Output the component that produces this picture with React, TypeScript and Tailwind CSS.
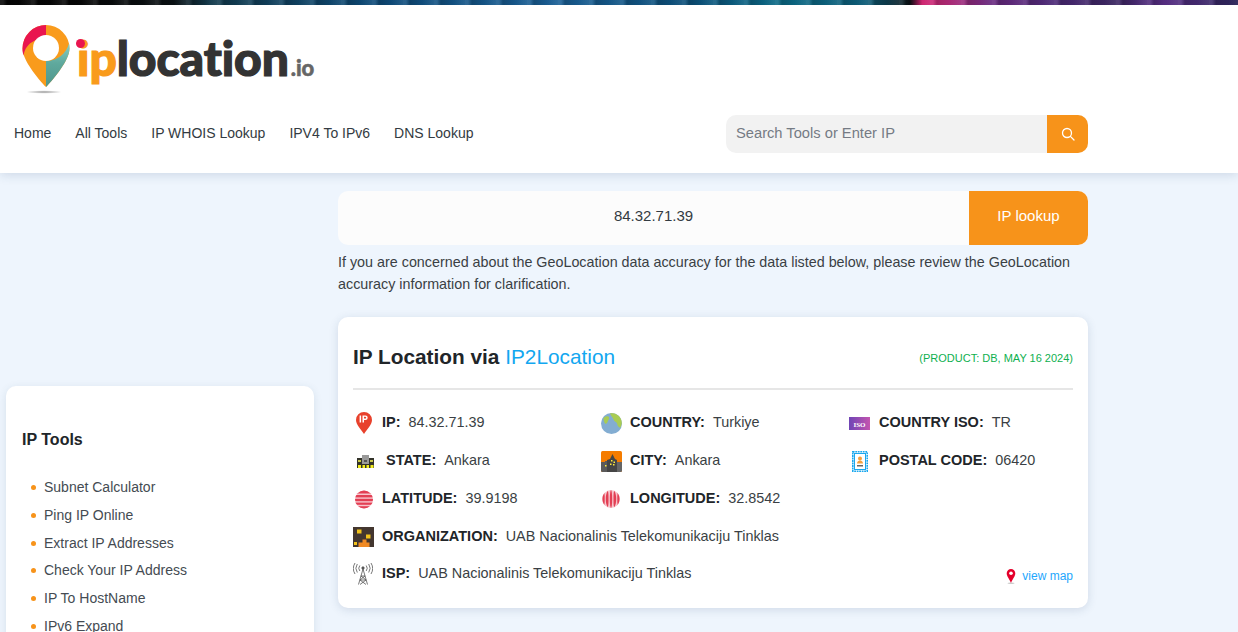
import React from "react";

function Logo() {
  return (
    <div className="flex items-start h-[72px]">
      <svg width="50" height="70" viewBox="0 0 50 70" className="shrink-0">
        <defs>
          <radialGradient id="shadowG">
            <stop offset="0" stopColor="#999" />
            <stop offset="1" stopColor="#fff" />
          </radialGradient>
          <linearGradient id="tealG" x1="0" x2="0" y1="0" y2="1">
            <stop offset="0" stopColor="#86cfc4" />
            <stop offset="0.45" stopColor="#5fa99d" />
            <stop offset="1" stopColor="#4f968b" />
          </linearGradient>
        </defs>
        <ellipse cx="23" cy="68" rx="18" ry="1.700" fill="url(#shadowG)" />
        <path d="M25 1A23.500 23.500 0 0 1 48.500 24.500C48.500 36 33 55 25 63C17 55 1.500 36 1.500 24.500A23.500 23.500 0 0 1 25 1Z" fill="#f99b1c" />
        <path d="M25 1A23.500 23.500 0 0 0 1.500 24.500C1.500 27 1.800 29 2.500 31.500C3.500 25 7 20 13 17L25 11Z" fill="#e9154f" />
        <path d="M48 19.500C48.500 21 48.500 23 48.500 24.500C48.500 36 33 55 25 63V37C36 37 45 30 48 19.500Z" fill="url(#tealG)" />
        <circle cx="25" cy="24" r="13" fill="#fff" />
      </svg>
      <div className="ml-[6px] mt-[10px] relative flex items-baseline font-['Lato',sans-serif] font-black leading-none tracking-[-0.1px] [-webkit-text-stroke:1.2px_#333333]">
        <span className="text-[48px] text-[#f99b1c] [-webkit-text-stroke:1.2px_#f99b1c]">ip</span>
        <span className="text-[48px] text-[#333333]">location</span>
        <span className="ml-[2px] text-[22px] text-[#666666] [-webkit-text-stroke:0.5px_#666666]">.io</span>
        <span className="absolute left-[-1px] top-[5px] w-[9px] h-[9px] rounded-full bg-[#e9154f]" />
      </div>
    </div>
  );
}

function Search() {
  return (
    <svg width="14" height="14" viewBox="0 0 14 14" fill="none" stroke="#fff" strokeWidth="1.300">
      <circle cx="6" cy="6" r="4.500" />
      <path d="M9.400 9.400 13 13" strokeLinecap="round" />
    </svg>
  );
}

function IpIcon() {
  return (
    <svg width="16" height="22" viewBox="0 0 16 22">
      <path d="M8 0a8 8 0 0 0-8 8c0 5 5 9 8 14 3-5 8-9 8-14a8 8 0 0 0-8-8Z" fill="#e8412c" />
      <rect x="3.600" y="3.500" width="1.500" height="7" fill="#fff" />
      <path d="M6.500 3.500h3a2.200 2.200 0 0 1 0 4.400H8v2.600H6.500Zm1.500 1.300v1.800h1.300a.9.9 0 0 0 0-1.800Z" fill="#fff" />
    </svg>
  );
}
function GlobeIcon() {
  return (
    <svg width="21" height="21" viewBox="0 0 21 21">
      <circle cx="10.500" cy="10.500" r="10.500" fill="#83add2" />
      <path d="M9 0.300c4-.6 9 1 11 6 1.300 3 .8 6-.8 8.500-1.500-.5-3-2-3-4-.5-2-3-2-3.600-4C12 5 10 3 9 .3Z" fill="#a9cc53" />
      <path d="M2.500 5c2-2 4.500-2 5.500-1 .5 2-1 3-1.500 5-.5 1.500-1.500 2-2.500 1.500C3 9 2.500 7 2.500 5Z" fill="#a9cc53" />
    </svg>
  );
}
function IsoIcon() {
  return (
    <svg width="21" height="13" viewBox="0 0 21 13">
      <defs>
        <linearGradient id="isoG" x1="0" x2="1" y1="0" y2="0">
          <stop offset="0" stopColor="#6f45b5" />
          <stop offset="1" stopColor="#c455b0" />
        </linearGradient>
      </defs>
      <rect width="21" height="13" fill="url(#isoG)" />
      <text x="10.500" y="9.500" textAnchor="middle" fill="#fff" fontSize="7" fontWeight="700" fontFamily="'Liberation Serif',serif">ISO</text>
    </svg>
  );
}
function StateIcon() {
  return (
    <svg width="17" height="13" viewBox="0 0 17 13">
      <rect x="5" y="0" width="7" height="13" fill="#9a9a9a" />
      <rect x="0" y="3" width="5" height="10" fill="#33332a" />
      <rect x="12" y="3" width="5" height="10" fill="#33332a" />
      <rect x="0" y="9" width="17" height="4" fill="#33332a" />
      <rect x="1" y="5" width="3" height="2" fill="#c9c94a" />
      <rect x="13" y="5" width="3" height="2" fill="#c9c94a" />
      <rect x="7" y="5" width="3" height="2" fill="#555" />
      <rect x="1" y="10" width="3" height="3" fill="#f2ec1e" />
      <rect x="5.500" y="10" width="2.500" height="3" fill="#f2ec1e" />
      <rect x="9.500" y="10" width="2.500" height="3" fill="#f2ec1e" />
      <rect x="13.500" y="10" width="3" height="3" fill="#f2ec1e" />
    </svg>
  );
}
function CityIcon() {
  return (
    <svg width="21" height="21" viewBox="0 0 21 21">
      <rect width="21" height="21" rx="1.500" fill="#f57c00" />
      <path d="M0 11h4v-1h3v11H1.500A1.500 1.500 0 0 1 0 19.500Z" fill="#5a5a5a" />
      <path d="M6 9l3-1 2.500-5 2.500 5 2 1v12H6Z" fill="#454545" />
      <path d="M16 11h5v8.500a1.500 1.500 0 0 1-1.500 1.500H16Z" fill="#666" />
      <rect x="10" y="9" width="1.500" height="1.500" fill="#ffeb3b" />
      <rect x="12.500" y="10.500" width="1.500" height="1.500" fill="#ffeb3b" />
      <rect x="9" y="12.500" width="1.500" height="1.500" fill="#ffeb3b" />
      <rect x="12" y="13" width="1.500" height="1.500" fill="#ffeb3b" />
      <rect x="4" y="14" width="1.500" height="1.500" fill="#ffeb3b" />
    </svg>
  );
}
function PostalIcon() {
  return (
    <svg width="16" height="21" viewBox="0 0 16 21">
      <rect x="0.800" y="0.800" width="14.400" height="19.400" fill="#fff" stroke="#1aa7ee" strokeWidth="1.600" strokeDasharray="1.800 0.700" />
      <rect x="2.500" y="2.500" width="11" height="16" fill="#fff" stroke="#1aa7ee" strokeWidth="1" />
      <circle cx="8" cy="7.500" r="2" fill="#f5a03c" />
      <path d="M5 12.500c0-2 1.500-3 3-3s3 1 3 3Z" fill="#f5a03c" />
      <rect x="5" y="14" width="6" height="1.500" fill="#666" />
    </svg>
  );
}
function LatIcon() {
  return (
    <svg width="18" height="19" viewBox="0 0 18 19">
      <defs>
        <clipPath id="latC"><circle cx="9" cy="9.500" r="9" /></clipPath>
      </defs>
      <g clipPath="url(#latC)">
        <rect width="18" height="19" fill="#f7c5cc" />
        <rect y="0" width="18" height="3.500" fill="#e33f54" />
        <rect y="5" width="18" height="2.400" fill="#e33f54" />
        <rect y="8.800" width="18" height="2.400" fill="#e33f54" />
        <rect y="12.600" width="18" height="2.200" fill="#e33f54" />
        <rect y="16.200" width="18" height="2.800" fill="#e33f54" />
      </g>
    </svg>
  );
}
function LonIcon() {
  return (
    <svg width="18" height="18" viewBox="0 0 18 18" fill="none">
      <circle cx="9" cy="9" r="9" fill="#f7c5cc" />
      <g fill="#e33f54">
        <ellipse cx="9" cy="9" rx="1.200" ry="9" />
        <path d="M5.800 .7C4.200 3 3.800 6 3.800 9s.4 6 2 8.300C6.600 15 6.500 12 6.500 9s.1-6-.7-8.300Z" />
        <path d="M12.200 .7C13.800 3 14.200 6 14.200 9s-.4 6-2 8.300C11.400 15 11.500 12 11.500 9s-.1-6 .7-8.300Z" />
        <path d="M2.400 3C1 5 .5 7 .5 9s.5 4 1.900 6C2.800 13 2.700 11 2.700 9s.1-4-.3-6Z" />
        <path d="M15.600 3C17 5 17.500 7 17.500 9s-.5 4-1.900 6C15.200 13 15.300 11 15.300 9s-.1-4 .3-6Z" />
      </g>
    </svg>
  );
}
function OrgIcon() {
  return (
    <svg width="21" height="20" viewBox="0 0 21 20">
      <rect width="21" height="20" fill="#43362f" />
      <rect x="4" y="2.500" width="4.500" height="4" fill="#f2c21a" />
      <rect x="13" y="7.500" width="4.500" height="4" fill="#f2c21a" />
      <path d="M9.500 12.500h4v3h3V20h-11v-4.500h4Z" fill="#f08a24" />
      <rect x="1" y="15" width="3" height="3" fill="#f2c21a" />
    </svg>
  );
}
function IspIcon() {
  return (
    <svg width="20" height="22" viewBox="0 0 20 22" fill="none" stroke="#555" strokeWidth="0.800">
      <path d="M10 6 5.500 21.500M10 6l4.500 15.500M7.800 13h4.400M6.800 17h6.400M7 17l6 4.500M13 17l-6 4.500M8 13l5 4M12 13 7 17" />
      <circle cx="10" cy="5" r="1.200" fill="#555" />
      <path d="M6.800 2.500a4.500 4.500 0 0 0 0 5.500M13.200 2.500a4.500 4.500 0 0 1 0 5.500M4.300 1a7.500 7.500 0 0 0 0 8.500M15.700 1a7.500 7.500 0 0 1 0 8.500M2 0a10.500 10.500 0 0 0 0 11M18 0a10.500 10.500 0 0 1 0 11" />
    </svg>
  );
}
function MapPin() {
  return (
    <svg width="10" height="15" viewBox="0 0 10 15">
      <ellipse cx="5" cy="14.200" rx="3.500" ry="0.700" fill="#ccc" />
      <path d="M5 0a4.300 4.300 0 0 0-4.300 4.300C.7 7.500 3.500 10 5 14c1.500-4 4.300-6.500 4.300-9.700A4.300 4.300 0 0 0 5 0Z" fill="#e4002b" />
      <circle cx="5" cy="4.300" r="1.800" fill="#fff" />
    </svg>
  );
}

function Field({ icon, label, value, w, labelClass = "" }: { icon: React.ReactNode; label: string; value: string; w: string; labelClass?: string }) {
  return (
    <div className={`flex items-center h-[22px] ${w}`}>
      <span className="w-[29px] shrink-0 flex items-center">{icon}</span>
      <b className={`font-bold text-[14.5px] text-[#212529] mr-[8px] ${labelClass}`}>{label}</b>
      <span className="text-[14.4px] text-[#3a3f44]">{value}</span>
    </div>
  );
}

const tools = ["Subnet Calculator", "Ping IP Online", "Extract IP Addresses", "Check Your IP Address", "IP To HostName", "IPv6 Expand"];

export default function App() {
  return (
    <div className="h-[632px] overflow-hidden bg-[#eef5fd] font-['Liberation_Sans',Arial,sans-serif] text-[14px] text-[#3a3f44]">
      <header className="relative z-10 bg-white h-[173px] shadow-[0_2px_10px_rgba(40,70,110,0.16)]">
        <div className="h-[5px] bg-[repeating-linear-gradient(90deg,rgba(255,255,255,0.1)_0px,rgba(255,255,255,0.1)_3px,rgba(0,0,0,0.18)_7px,rgba(0,0,0,0.05)_19px,rgba(255,255,255,0.08)_31px),linear-gradient(90deg,#050505_0%,#060606_6%,#0a1114_14%,#123a4c_17%,#0d4a78_30%,#1a5f96_45%,#0c4f7a_55%,#0b6a86_63%,#0d5c78_70%,#0c1f26_73%,#0b0f14_73.500%,#d3206f_74.500%,#c02a78_76%,#6a2a80_80%,#4d2a78_85%,#3a2560_90%,#5a2f88_94%,#2a2458_100%)]" />
        <div className="pl-[21px] pt-[19px] h-[88px]">
          <Logo />
        </div>
        <div className="flex items-center pl-[14px] h-[38px] mt-[22px] w-[1088px]">
          <nav className="flex gap-[24px] text-[#333b42] mb-[2px]">
            <span>Home</span>
            <span>All Tools</span>
            <span>IP WHOIS Lookup</span>
            <span>IPV4 To IPv6</span>
            <span>DNS Lookup</span>
          </nav>
          <div className="ml-auto flex h-[38px] w-[362px] rounded-[10px] overflow-hidden bg-[#f2f2f2]">
            <span className="flex-1 pl-[10px] leading-[36px] text-[14.7px] text-[#757b84]">Search Tools or Enter IP</span>
            <span className="w-[41px] bg-[#f7931a] flex items-center justify-center">
              <Search />
            </span>
          </div>
        </div>
      </header>

      <div className="flex pl-[6px] gap-[24px]">
        <aside className="w-[308px] shrink-0 mt-[213px] bg-white rounded-[10px] shadow-[0_2px_8px_rgba(40,70,110,0.12)] pl-[16px] pt-[44px] pb-[20px]">
          <h3 className="text-[16px] font-bold text-[#212529] leading-[20px]">IP Tools</h3>
          <ul className="mt-[24px]">
            {tools.map((t) => (
              <li key={t} className="flex items-center h-[27.7px] pl-[9px]">
                <span className="w-[5px] h-[5px] rounded-full bg-[#f7931a] mr-[8px]" />
                <span className="text-[#444b52]">{t}</span>
              </li>
            ))}
          </ul>
        </aside>

        <main className="w-[750px] shrink-0 pt-[18px]">
          <div className="flex h-[54px] rounded-[10px] overflow-hidden bg-[#fcfcfc] text-[15px]">
            <div className="flex-1 flex items-center justify-center pb-[4px] text-[#333b42]">84.32.71.39</div>
            <div className="w-[119px] bg-[#f7931a] text-white flex items-center justify-center pb-[4px]">IP lookup</div>
          </div>
          <p className="mt-[6px] leading-[22px] text-[14.33px] text-[#3a3f44]">
            If you are concerned about the GeoLocation data accuracy for the data listed below, please review the GeoLocation accuracy information for clarification.
          </p>

          <section className="mt-[22px] h-[291px] bg-white rounded-[10px] shadow-[0_2px_10px_rgba(40,70,110,0.15)] px-[15px] relative">
            <div className="flex items-center justify-between h-[73px] pt-[9px] border-b-2 border-[#e6e6e6]">
              <h2 className="text-[20.8px] font-bold text-[#212529]">
                IP Location via <span className="font-normal text-[#12a7f0]">IP2Location</span>
              </h2>
              <span className="text-[11px] mt-[2px] text-[#0fb04f]">(PRODUCT: DB, MAY 16 2024)</span>
            </div>

            <div className="pt-[22px] flex flex-col gap-[16px]">
              <div className="flex">
                <Field w="w-[248px]" icon={<span className="pl-[3px] flex"><IpIcon /></span>} label="IP:" value="84.32.71.39" />
                <Field w="w-[248px]" icon={<GlobeIcon />} label="COUNTRY:" value="Turkiye" />
                <Field w="w-[224px]" icon={<IsoIcon />} label="COUNTRY ISO:" value="TR" labelClass="ml-[1px]" />
              </div>
              <div className="flex">
                <Field w="w-[248px]" icon={<span className="flex pl-[4px]"><StateIcon /></span>} label="STATE:" value="Ankara" labelClass="ml-[4px]" />
                <Field w="w-[248px]" icon={<CityIcon />} label="CITY:" value="Ankara" />
                <Field w="w-[224px]" icon={<span className="pl-[3px] flex"><PostalIcon /></span>} label="POSTAL CODE:" value="06420" labelClass="ml-[1px]" />
              </div>
              <div className="flex">
                <Field w="w-[248px]" icon={<span className="pl-[2px] flex"><LatIcon /></span>} label="LATITUDE:" value="39.9198" />
                <Field w="w-[248px]" icon={<span className="pl-[1px] flex"><LonIcon /></span>} label="LONGITUDE:" value="32.8542" />
              </div>
              <Field w="w-full" icon={<OrgIcon />} label="ORGANIZATION:" value="UAB Nacionalinis Telekomunikaciju Tinklas" />
              <div className="flex items-center justify-between mt-[-2px]">
                <Field w="" icon={<IspIcon />} label="ISP:" value="UAB Nacionalinis Telekomunikaciju Tinklas" />
                <span className="flex items-center gap-[6px] text-[12px] text-[#1ea7fd] mt-[5px]">
                  <MapPin />
                  view map
                </span>
              </div>
            </div>
          </section>
        </main>
      </div>
    </div>
  );
}
